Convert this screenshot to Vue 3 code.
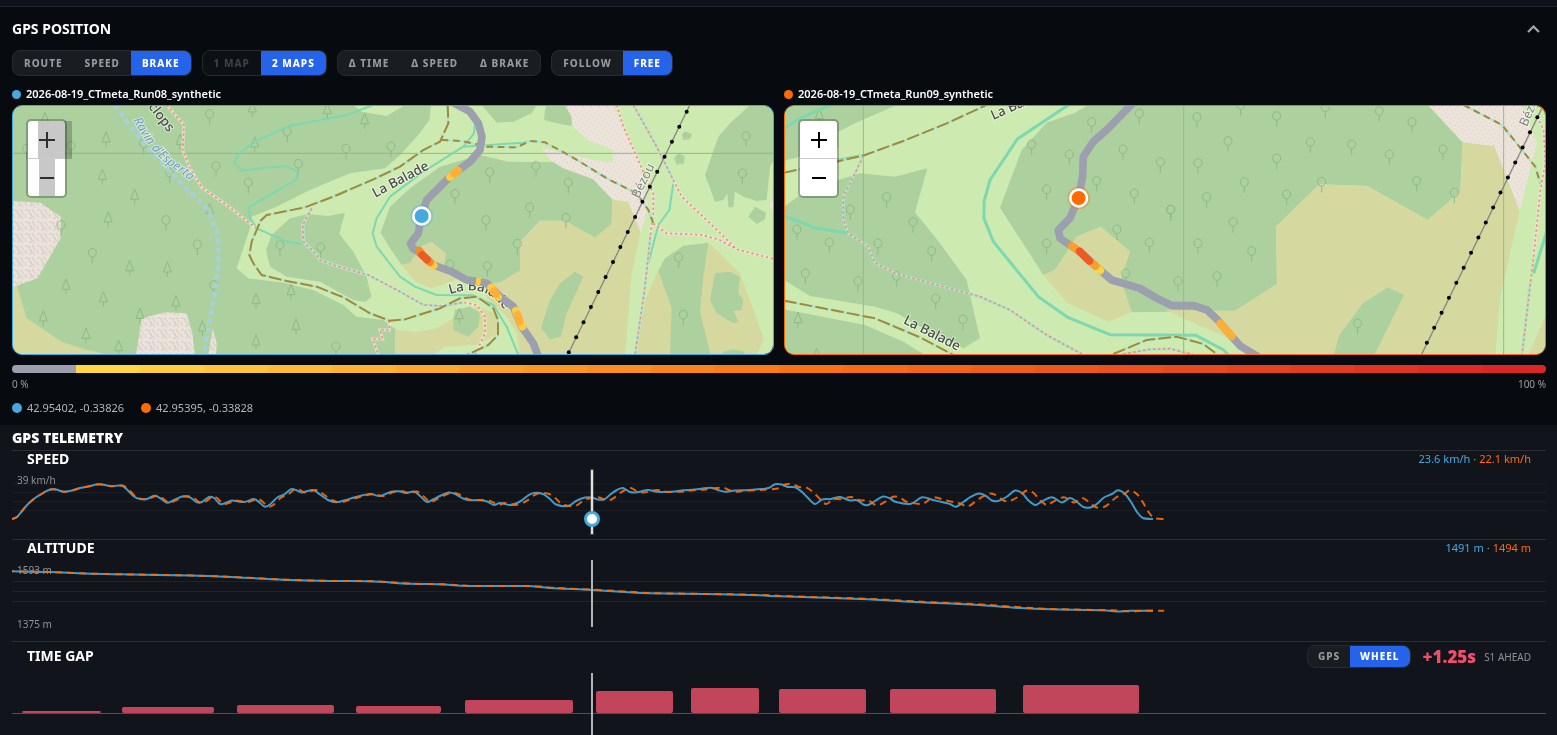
<script setup>
import { ref } from 'vue'

const mode = ref('BRAKE')
const maps = ref('2 MAPS')
const view = ref('FREE')
const source = ref('WHEEL')

const stops = [[255, 214, 68], [249, 115, 22], [220, 38, 38]]
function heat(t) {
  const i = t < 0.5 ? 0 : 1
  const f = (t - i * 0.5) * 2
  return `rgb(${stops[i].map((c, k) => Math.round(c + (stops[i + 1][k] - c) * f)).join(',')})`
}
const scale = ['#9c9fad', ...Array.from({ length: 23 }, (_, i) => heat(i / 22))]

const roundA = [[629,42],[862,95],[1038,146],[1173,139],[648,198],[895,191],[745,247],[431,131],[509,218],[213,137],[80,146],[277,458],[592,433],[498,360],[183,375],[840,435],[962,442],[1008,739],[641,555],[1469,216],[1608,198],[1705,247],[1365,281],[1589,322],[1458,360],[1698,353],[1552,431],[1350,493],[1462,498],[2238,108],[2227,220],[2036,472],[2050,644]]
const pineA = [[135,38],[318,95],[757,5],[982,10],[1094,40],[764,110],[540,102],[307,207],[404,267],[629,310],[325,335],[389,481],[502,485],[198,537],[310,575],[528,587],[130,632],[258,684],[356,721],[420,624],[607,662],[768,580],[888,657],[768,704],[873,553],[1378,625]]
const roundB = [[935,126],[1078,100],[755,193],[868,223],[1029,208],[1141,246],[800,328],[950,302],[1063,340],[1172,389],[800,490],[1011,448],[1108,487],[1037,580],[320,351],[211,388],[399,426],[51,448],[148,487],[294,490],[455,513],[76,580],[234,603],[350,588],[467,655],[549,718],[1251,111],[1382,75],[1490,108],[1636,82],[1798,93],[1896,126],[1344,183],[1591,186],[1715,193],[1828,223],[1989,208],[1254,249],[1490,235],[1393,306],[1625,305],[1520,343],[1910,302],[1280,351],[2023,338],[1172,389],[1359,426],[1254,490],[1415,513],[1194,603],[1311,588],[1733,730]]
const pineB = [[118,85],[54,697],[110,805]]
const pylonsA = Array.from({ length: 17 }, (_, i) => [2060 - i * 22.1, 35 + i * 45.1])
const pylonsB = Array.from({ length: 16 }, (_, i) => [2272 - i * 22.1, 112 + i * 45.1])

const speed = [[12,519],[17,517],[22,511],[28,504],[35,498],[43,493],[50,489.5],[56,489.5],[63,491.7],[70,491],[80,488],[90,486],[98,484.3],[105,485],[111,486.3],[121,485.5],[127,489.5],[134,496.5],[140,499],[147,499],[154,495.7],[160,498],[167,502.7],[174,500],[183,496.3],[190,497.3],[197,502.3],[202,502],[209,497],[214,498],[220,504],[226,502.7],[232,500.5],[244,502],[254,499],[260,503],[265,506.7],[270,504.5],[277,497.7],[284,494.7],[291,489.3],[296,490],[302,492.5],[313,490],[320,494.5],[328,500],[336,502.3],[344,500.5],[356,497],[370,494],[380,496],[391,491.7],[399,491.3],[406,493],[414,491.5],[420,496],[427,502],[433,499.5],[440,496],[449,492.5],[456,494.5],[463,498.5],[470,500.3],[479,500],[487,501.5],[494,505],[500,503],[510,505],[520,501.5],[528,495.5],[534,493],[543,494],[550,499],[556,504.5],[568,506],[576,501],[585,497.5],[592,497.5],[597,499.3],[604,499.5],[611,494],[617,490],[623,488],[630,492],[637,492.3],[648,490],[657,491.7],[672,491.7],[683,490.3],[695,489.5],[711,487.7],[718,490],[725,491.7],[735,490.5],[750,490],[765,488.7],[770,487.3],[775,484.3],[782,484.5],[788,487],[795,487.3],[802,492],[808,498],[815,504],[822,499.5],[831,499],[840,497],[849,500.3],[857,500.3],[863,504.3],[868,505],[875,501],[883,496.5],[890,498.5],[896,502],[911,503.7],[922,497.3],[933,500],[944,502.5],[950,504],[956,506.7],[964,501.5],[971,496.7],[979,493.5],[986,496],[992,500.5],[998,501],[1007,496.5],[1015,490.5],[1022,493],[1028,500],[1035,505],[1041,502],[1052,497.3],[1062,502.5],[1070,498],[1077,502],[1084,507.3],[1092,507],[1098,503],[1104,497.5],[1112,494],[1118,490.3],[1125,494],[1131,502],[1137,512],[1143,518],[1153,519]]
const altitude = [[12,571.3],[50,572],[85,573.5],[120,574.3],[190,575.5],[240,577.5],[290,580],[330,581],[370,581.3],[410,583.7],[440,584.3],[470,586],[525,586],[550,588],[592,590],[625,592],[650,593.3],[720,594.3],[760,595.3],[780,596.3],[860,599],[920,602.3],[970,604.5],[1020,608],[1050,609.3],[1100,610.3],[1117,611.5],[1130,610.7],[1153,610.7]]

// Delay of the second run behind the first one, by position.
const delay = [[12,0],[98,1],[265,4],[450,3],[534,6],[623,8],[711,11],[815,11],[1118,12],[1160,11]]
function lag(x) {
  const i = Math.max(1, delay.findIndex(d => d[0] >= x))
  const [a, b] = [delay[i - 1], delay[i]]
  return a[1] + (b[1] - a[1]) * (x - a[0]) / (b[0] - a[0])
}
const behind = pts => pts.map(([x, y]) => [x + lag(x), y])
function curve(p) {
  let d = `M${p[0][0]} ${p[0][1]}`
  for (let i = 0; i < p.length - 1; i++) {
    const a = p[i - 1] || p[i], b = p[i], c = p[i + 1], e = p[i + 2] || c
    d += `C${b[0] + (c[0] - a[0]) / 6} ${b[1] + (c[1] - a[1]) / 6} ${c[0] - (e[0] - b[0]) / 6} ${c[1] - (e[1] - b[1]) / 6} ${c[0]} ${c[1]}`
  }
  return d
}
const speed1 = curve(speed), speed2 = curve(behind(speed))
const alt1 = curve(altitude), alt2 = curve(behind(altitude))

const gaps = [[22,101,711],[122,214,707],[237,334,705],[356,441,706],[465,573,700],[596,673,691],[691,759,688],[779,866,689],[890,996,689],[1023,1139,685]]
const cursor = { left: (592 - 12) / 15.34 + '%' }
</script>

<template>
  <main class="page">
    <section class="position">
      <header class="head">
        <h2>GPS POSITION</h2>
        <button class="collapse" aria-label="Collapse GPS position">
          <svg width="13" height="8" viewBox="0 0 13 8"><path d="M1 7 6.500 1.500 12 7" fill="none" stroke="#a3a6ab" stroke-width="2.200" /></svg>
        </button>
      </header>

      <div class="toolbar">
        <div class="group">
          <button v-for="o in ['ROUTE', 'SPEED', 'BRAKE']" :key="o" :class="{ on: mode === o }" @click="mode = o">{{ o }}</button>
        </div>
        <div class="group">
          <button :class="{ on: maps === '1 MAP' }" disabled>1 MAP</button>
          <button :class="{ on: maps === '2 MAPS' }">2 MAPS</button>
        </div>
        <div class="group">
          <button>Δ TIME</button><button>Δ SPEED</button><button>Δ BRAKE</button>
        </div>
        <div class="group">
          <button v-for="o in ['FOLLOW', 'FREE']" :key="o" :class="{ on: view === o }" @click="view = o">{{ o }}</button>
        </div>
      </div>

      <div class="maps">
        <article>
          <h3><i class="dot blue"></i>2026-08-19_CTmeta_Run08_synthetic</h3>
          <div class="map one">
            <svg class="canvas" viewBox="39 18 2280 744" preserveAspectRatio="xMidYMid slice">
              <defs>
                <pattern id="scree" width="36" height="36" patternUnits="userSpaceOnUse">
                  <rect width="36" height="36" fill="#ebe2da" />
                  <path d="M3 8q5-7 9 0t8-2M24 4q8 2 4 9M5 18q-4 8 4 10M14 16q8-3 8 5t8 2M15 31q5-6 9 0M31 27q-5 4 1 7M32 13l3 6" fill="none" stroke="#cdc8c3" stroke-width="3" />
                </pattern>
                <pattern id="gravel" width="24" height="24" patternUnits="userSpaceOnUse">
                  <rect width="24" height="24" fill="#ece3db" />
                  <path d="M3 4h3M15 9h3M8 16h3M20 20h3" stroke="#d8cbc3" stroke-width="3" />
                </pattern>
                <path id="ravin" d="M400 60 Q455 165 520 205 T610 300" />
                <path id="balade" d="M1350 582Q1420 560 1462 582T1530 660" />
              </defs>
              <rect x="0" y="0" width="2400" height="800" fill="#cdebb0" />
              <g fill="#acd19e">
                <path d="M36 15H1060L1085 35 1160 48 1215 15H1293L1288 60 1255 105 1200 165 1155 205 1050 220 930 270 830 320 755 350 750 385 710 505 745 535 850 548 940 570 1030 615 1070 650 1150 660 1190 690 1185 765H36Z" />
                <path d="M1440 165 1525 185 1670 187 1780 238 1837 298 1835 372 1785 413 1695 363 1620 362 1560 425 1560 512 1500 548 1460 550 1335 510 1295 425 1230 490 1205 495 1170 445 1142 398 1170 320 1230 265 1320 200Z" />
                <path d="M1445 15H1610L1595 40 1540 65 1490 68ZM1640 15H1695L1715 50V78L1670 70 1632 60 1635 30Z" />
                <path d="M2330 15H2250L2190 70 2155 110 2115 225 2145 305 2170 300 2182 280 2185 322H2200L2205 275 2230 290 2270 303 2300 300 2310 200 2330 165Z" />
                <path d="M2045 105 2055 94 2076 102 2070 118 2050 120ZM2022 175 2035 160 2054 168 2052 190 2030 194ZM2245 350 2265 320 2298 338 2295 358 2270 372Z" />
                <path d="M870 355 925 342 985 348 1035 338 1018 402 1060 455 1100 530 1114 590 1095 606 1060 600 960 545 860 530 810 500 798 450 815 405Z" />
              </g>
              <g fill="#d6d99f">
                <path d="M1295 425 1338 460 1332 505 1380 535 1340 550 1295 565 1245 545 1205 495 1230 488 1260 440Z" />
                <path d="M1837 298 1885 305 1922 395 1895 520 1885 650 1875 765H1560L1550 700 1520 650 1460 595 1450 550 1500 548 1560 512V425L1620 362H1695L1785 413 1835 372Z" />
                <path d="M2128 430 2220 520 2292 718 2270 765H1905L1935 600 1975 510 2020 455Z" />
                <path d="M36 555H50L80 655 185 725 260 750 330 765H36Z" />
                <path d="M1185 690 1250 695 1310 685 1360 655 1430 620 1490 640 1495 700 1430 735 1335 740 1300 765H1185Z" />
              </g>
              <g fill="#acd19e">
                <path d="M1725 515 1750 530 1700 640 1682 710 1650 718 1623 683 1650 600 1680 550Z" />
                <path d="M2125 428 2050 437 1995 475 1975 512 2015 625 2010 765H2132L2100 635 2110 530Z" />
                <path d="M2145 520 2190 515 2220 530 2215 580 2230 600 2225 630 2200 632 2215 665 2200 670 2150 640 2130 600ZM2170 755 2200 748 2235 755 2230 765H2165Z" />
                <path d="M1360 655 1365 630 1410 620 1440 640 1435 680 1405 710 1360 690Z" />
              </g>
              <path fill="url(#scree)" d="M36 303 122 308 182 350V415L112 535 36 562ZM408 765 425 655 495 637 560 640 577 700 585 765ZM625 765 638 683 650 730 648 765Z" />
              <path fill="url(#gravel)" d="M1695 15 1715 50 1718 80 1765 120 1838 150V188L1780 180 1625 143 1650 180 1690 205 1780 238 1837 298 1885 305 1922 398 1945 320 1930 260 1920 200 1860 60 1838 15ZM2319 300 2308 315 2319 335Z" />

              <g class="tree">
                <path v-for="([x, y], i) in roundA" :key="'r' + i" :d="`M${x} ${y + 13}v19M${x - 12} ${y}a12 13 0 1 0 24 0a12 13 0 1 0-24 0`" />
                <path v-for="([x, y], i) in pineA" :key="'p' + i" :d="`M${x} ${y}l-12 31h24zM${x} ${y + 31}v15`" />
              </g>
              <path d="M36 160H2330" stroke="#8fb78a" stroke-width="3" />

              <path class="water" d="M345 15 380 65 440 140 510 215 570 275 625 330 655 410 655 490 648 560 630 660 610 765" />
              <g class="teal">
                <path d="M1120 15 1040 45 870 77 770 122 720 158 703 187 725 212 800 203 860 199 892 215 890 238 748 320 748 350 770 385 860 425 905 432" />
                <path d="M1425 70 1422 100 1390 140 1270 215 1170 290 1130 355 1118 400 1130 440 1200 530 1245 560 1310 585 1420 586 1480 615 1520 680 1555 765" />
                <path d="M1390 140 1470 135 1570 128 1590 123M2020 250 2008 330 1975 375 1945 490" />
              </g>
              <path class="foot-bed" d="M500 15 552 75 548 150 570 205 605 262 700 330 768 385M935 325 908 375 910 425 950 465 960 480 1000 495 1105 525 1200 575 1270 615 1330 618 1390 607 1430 615 1455 650V700L1425 765M1168 662V690H1140L1148 717H1118L1135 765M1850 15 1870 80 1905 160 1930 215 1960 280V340L1952 400 1935 560 1905 765M1900 15 1970 140 2020 240 2045 290 2130 370 2210 448 2325 478M1960 370 2000 400 2100 404 2155 418 2210 448" />
              <path class="mint-bed" d="M935 325 908 375 910 425 950 465 960 480 1000 495 1105 525 1200 575 1270 615 1330 618 1390 607M1900 15 1970 140 2020 240M1952 400 1935 560 1905 765" />
              <path class="foot" d="M500 15 552 75 548 150 570 205 605 262 700 330 768 385M935 325 908 375 910 425 950 465 960 480 1000 495 1105 525 1200 575 1270 615 1330 618 1390 607 1430 615 1455 650V700L1425 765M1168 662V690H1140L1148 717H1118L1135 765M1850 15 1870 80 1905 160 1930 215 1960 280V340L1952 400 1935 560 1905 765M1900 15 1970 140 2020 240 2045 290 2130 370 2210 448 2325 478M1960 370 2000 400 2100 404 2155 418 2210 448" />
              <path class="track-bed" d="M1343 15 1345 70 1320 125 1270 150 1200 200 1120 238 1000 290 915 322 800 345 782 362 755 425 748 465 760 490 785 525 860 543 950 560 1030 592 1110 640 1168 662 1215 658 1320 625 1380 595 1430 590 1480 625 1494 660V705L1465 735 1400 765" />
              <path class="track-bed" d="M1325 120 1385 123 1460 140 1550 142 1590 123 1635 127 1715 170 1820 235 1910 280 1945 330 1960 370" />
              <path class="track" d="M1343 15 1345 70 1320 125 1270 150 1200 200 1120 238 1000 290 915 322 800 345 782 362 755 425 748 465 760 490 785 525 860 543 950 560 1030 592 1110 640 1168 662 1215 658 1320 625 1380 595 1430 590 1480 625 1494 660V705L1465 735 1400 765" />
              <path class="track short" d="M1325 120 1385 123 1460 140 1550 142 1590 123 1635 127 1715 170 1820 235 1910 280 1945 330 1960 370" />

              <path class="power" d="M2068 18 1703 765" />
              <circle v-for="([x, y], i) in pylonsA" :key="'y' + i" :cx="x" :cy="y" r="6" />
              <text class="place" transform="translate(1126 293) rotate(-28)">La Balade</text>
              <text class="place"><textPath href="#balade">La Balade</textPath></text>
              <text class="place" text-anchor="end" transform="translate(505 98) rotate(52)">Cyclops</text>
              <text class="place soft" transform="translate(1916 297) rotate(-64)">Bézou</text>
              <text class="place river"><textPath href="#ravin">Ravin d'Esperta</textPath></text>

              <g class="route">
                <path d="M1360 8 1410 35 1435 70 1446 110 1440 150 1410 185 1350 230 1280 300 1265 345 1255 400 1232 430 1238 445 1265 462 1300 495 1355 515 1400 540 1435 545 1460 550 1500 590 1540 620 1565 680 1600 730 1615 770" />
                <path stroke="#fdcc43" d="M1350 231 1370 214M1290 488 1301 497M1473 563 1494 591M1547 632 1567 680" />
                <path class="flat" stroke="#fdcc43" d="M1428 543 1442 545" />
                <path stroke="#fdb035" d="M1362 221 1374 212M1482 574 1489 583M1553 645 1558 664" />
                <path stroke="#f98a29" d="M1258 452 1264 459M1284 482 1290 487" />
                <path stroke="#ef5a20" d="M1266 465 1281 479" />
              </g>
              <circle cx="1265" cy="348" r="34" fill="#45a9df" opacity=".35" />
              <circle cx="1265" cy="348" r="25" fill="#45a9df" stroke="#fff" stroke-width="8" />
            </svg>
            <div class="zoom held">
              <button aria-label="Zoom in"><svg width="16" height="16" viewBox="0 0 16 16"><path d="M0 8H16M8 0V16" /></svg></button>
              <button aria-label="Zoom out"><svg width="16" height="16" viewBox="0 0 16 16"><path d="M1 8H15" /></svg></button>
            </div>
          </div>
        </article>

        <article>
          <h3><i class="dot orange"></i>2026-08-19_CTmeta_Run09_synthetic</h3>
          <div class="map two">
            <svg class="canvas" viewBox="15 78 2280 744" preserveAspectRatio="xMidYMid slice">
              <rect x="0" y="60" width="2400" height="800" fill="#cdebb0" />
              <g fill="#acd19e">
                <path d="M12 75H350L225 130 175 155 175 202 60 230 12 242ZM12 380 60 345 175 300 240 280 345 290 442 265 405 397 480 490 560 600 600 775 550 805 430 745 350 700 285 680 90 648 12 600ZM12 688 255 735 370 785 435 825H12Z" />
                <path d="M925 75 885 98 800 128 725 210 660 383 790 585 825 570 890 470 962 440 1050 515 1020 600 1055 697 1366 692 1491 612 1488 440 1618 313 1761 318 1943 420 2041 335 2048 187 1944 75Z" />
              </g>
              <path fill="#d6d99f" d="M962 440 1050 515 1022 600 1055 697 985 725 860 668 790 585 825 570 890 470ZM1366 692 1491 612 1488 440 1618 313 1761 318 1943 420 2041 335 2048 187 2143 198 2219 392 2161 650 2146 825H1411L1350 778 1155 690ZM2300 700 2245 825H2300Z" />
              <path fill="#acd19e" d="M1661 825 1678 765 1749 670 1824 622 1872 645 1783 825Z" />
              <path fill="url(#gravel)" d="M1944 75 2048 187 2143 198 2219 392 2271 190 2226 75Z" />
              <g class="tree">
                <path v-for="([x, y], i) in roundB" :key="'r' + i" :d="`M${x} ${y + 13}v19M${x - 12} ${y}a12 13 0 1 0 24 0a12 13 0 1 0-24 0`" />
                <path v-for="([x, y], i) in pineB" :key="'p' + i" :d="`M${x} ${y}l-12 31h24zM${x} ${y + 31}v15`" />
              </g>
              <path d="M250 75V825M1211 75V825M2171 75V825" stroke="#94bb8c" stroke-width="3" />
              <g class="teal wide">
                <path d="M12 145 60 115 150 75M12 408 110 445 205 460M150 245 250 226" />
                <path d="M865 75 712 177 630 300 612 365V415L640 485 775 650 865 713 990 764 1248 766 1331 810 1345 825M2300 455 2261 580" />
              </g>
              <path class="mint-bed" d="M250 228 215 300 190 350V420L205 460 265 500 285 548 350 582 600 650 690 690 800 765 905 822M1030 822 1110 808 1170 806 1240 824" />
              <path class="foot-bed" d="M2271 110 2291 150 2296 250 2281 330 2261 530" />
              <path class="mint-bed" d="M2251 600 2226 825" />
              <path class="foot" d="M250 228 215 300 190 350V420L205 460 265 500 285 548 350 582 600 650 690 690 800 765 905 822M1030 822 1110 808 1170 806 1240 824M2271 110 2291 150 2296 250 2281 330 2261 530 2226 825" />
              <path class="track-bed" d="M12 278 60 268 170 245 255 225 370 183 500 130 620 75M12 662 285 715 420 772 520 825M1000 822 1100 780 1190 770 1270 792 1310 822M2051 75 2166 135 2226 210 2266 260 2281 310" />
              <path class="track" d="M12 278 60 268 170 245 255 225 370 183 500 130 620 75M12 662 285 715 420 772 520 825M1000 822 1100 780 1190 770 1270 792 1310 822" />
              <path class="track short" d="M2051 75 2166 135 2226 210 2266 260 2281 310" />
              <path class="power" d="M2290 76 1924 825" />
              <circle v-for="([x, y], i) in pylonsB" :key="'y' + i" :cx="x" :cy="y" r="6" />
              <text class="place" transform="translate(640 120) rotate(-24)">La Balade</text>
              <text class="place" transform="translate(368 729) rotate(27)">La Balade</text>
              <text class="place soft" transform="translate(2240 142) rotate(-66)">Bézou</text>
              <g class="route">
                <path d="M1060 68 980 150 940 185 910 230 908 290 895 355 870 415 835 450 840 475 870 495 905 520 960 570 995 600 1080 625 1131 655 1176 677 1241 677 1281 690 1311 718 1356 770 1381 798 1431 828" />
                <path stroke="#fdd243" d="M955 567 961 572" />
                <path stroke="#fdb035" d="M1321 730 1355 769" />
                <path stroke="#fb9e2e" d="M876 498 890 508M938 550 947 558" />
                <path stroke="#ef5a20" d="M899 514 928 543" />
              </g>
              <circle cx="896" cy="354" r="34" fill="#ff6b00" opacity=".35" />
              <circle cx="896" cy="354" r="25" fill="#ff6b00" stroke="#fff" stroke-width="8" />
            </svg>
            <div class="zoom">
              <button aria-label="Zoom in"><svg width="16" height="16" viewBox="0 0 16 16"><path d="M0 8H16M8 0V16" /></svg></button>
              <button aria-label="Zoom out"><svg width="16" height="16" viewBox="0 0 16 16"><path d="M1 8H15" /></svg></button>
            </div>
          </div>
        </article>
      </div>

      <div class="scale"><span v-for="(c, i) in scale" :key="i" :style="{ background: c }"></span></div>
      <div class="scale-labels"><span>0 %</span><span>100 %</span></div>
      <div class="coords">
        <span><i class="dot blue"></i>42.95402, -0.33826</span>
        <span><i class="dot orange"></i>42.95395, -0.33828</span>
      </div>
    </section>

    <section class="telemetry">
      <h2>GPS TELEMETRY</h2>

      <article class="row speed">
        <header><h3>SPEED</h3><p><b class="c1">23.6 km/h</b> · <b class="c2">22.1 km/h</b></p></header>
        <div class="plot">
          <svg viewBox="12 470 1534 64" preserveAspectRatio="none">
            <path class="rule faint" d="M12 484H1546M12 492.500H1546M12 501.500H1546M12 510.500H1546" />
            <path class="line c1" :d="speed1" /><path class="line c2" :d="speed2" />
          </svg>
          <span class="axis top">39 km/h</span>
          <i class="cursor strong" :style="cursor"></i>
          <i class="knob" :style="cursor"></i>
        </div>
      </article>

      <article class="row altitude">
        <header><h3>ALTITUDE</h3><p><b class="c1">1491 m</b> · <b class="c2">1494 m</b></p></header>
        <div class="plot">
          <svg viewBox="12 560 1534 67" preserveAspectRatio="none">
            <path class="rule" d="M12 581.500H1546M12 591.500H1546M12 601.500H1546" />
            <path class="line c1" :d="alt1" /><path class="line c2" :d="alt2" />
          </svg>
          <span class="axis top">1593 m</span>
          <span class="axis bottom">1375 m</span>
          <i class="cursor" :style="cursor"></i>
        </div>
      </article>

      <article class="row gap">
        <header>
          <h3>TIME GAP</h3>
          <div class="gap-info">
            <div class="group small">
              <button v-for="o in ['GPS', 'WHEEL']" :key="o" :class="{ on: source === o }" @click="source = o">{{ o }}</button>
            </div>
            <strong>+1.25s</strong>
            <span>S1 AHEAD</span>
          </div>
        </header>
        <div class="plot">
          <svg viewBox="12 673 1534 62" preserveAspectRatio="none">
            <path class="base" d="M12 713.500H1546" />
            <rect v-for="([a, b, t], i) in gaps" :key="i" :x="a" :y="t" :width="b - a" :height="713 - t" rx="2" fill="#c2465b" />
          </svg>
          <i class="cursor" :style="cursor"></i>
        </div>
      </article>
    </section>
  </main>
</template>

<style>
body { background: #070a0f; overflow: hidden; }
</style>

<style scoped>
* { box-sizing: border-box; }
.page { font-family: "Noto Sans", "Open Sans", sans-serif; color: #fff; border-top: 6px solid #0d1119; }
h2, h3, p { margin: 0; }
button { font-family: inherit; border: 0; padding: 0; margin: 0; cursor: pointer; }
.position { border-top: 1px solid #24282d; padding: 12px 11px 9px 12px; }
.head { display: flex; align-items: center; justify-content: space-between; height: 20px; }
h2 { font-size: 14px; line-height: 20px; font-weight: 700; }
.collapse { background: none; display: flex; padding: 4px 6px; }
.toolbar { display: flex; gap: 10px; margin-top: 11px; }
.group { display: flex; height: 26px; border: 1px solid #272b30; border-radius: 8px; overflow: hidden; background: #191c20; }
.group button { background: none; color: #96989b; font-size: 10px; line-height: 24px; font-weight: 800; letter-spacing: 1px; padding: 0 11px; }
.group button.on { background: #2563eb; color: #fff; }
.group button:disabled { background: #0d1014; color: #3d4044; }
.maps { display: grid; grid-template-columns: 1fr 1fr; gap: 10px; margin-top: 10px; }
.maps h3 { display: flex; align-items: center; gap: 5px; font-size: 11px; line-height: 16px; font-weight: 600; height: 16px; margin-bottom: 3px; }
.dot { display: block; width: 9px; height: 9px; border-radius: 50%; }
.blue { background: #45a9df; }
.orange { background: #ff6b00; }
.map { position: relative; height: 250px; border: 1px solid; border-radius: 10px; overflow: hidden; }
.map.one { border-color: #45a9df; }
.map.two { border-color: #ff6b00; }
.canvas { display: block; width: 100%; height: 100%; }
.zoom { position: absolute; left: 13px; top: 13px; width: 41px; border: 2px solid rgba(0, 0, 0, .25); border-radius: 5px; background-clip: padding-box; background-color: #fff; }
.zoom button { display: flex; align-items: center; justify-content: center; position: relative; width: 100%; height: 37px; background: none; }
.zoom button + button { border-top: 1px solid #ccc; height: 38px; }
.zoom path { fill: none; stroke: #000; stroke-width: 2; }
.zoom svg { position: relative; }
.held path { stroke: #2e2e2e; }
.held button::before { content: ""; position: absolute; left: 10px; top: 0; width: 34px; height: 38px; background: #bcbcbc; opacity: .82; mix-blend-mode: multiply; }
.held button + button::before { left: 11px; width: 16px; height: 37px; }
.tree path { fill: none; stroke: #8fb985; stroke-width: 3; }
.teal path { fill: none; stroke: #7bd8b0; stroke-width: 6; stroke-linejoin: round; }
.wide path { stroke-width: 9; }
.water { fill: none; stroke: #a7d0df; stroke-width: 13; stroke-dasharray: 15 12; }
.foot-bed { fill: none; stroke: #efe9dd; stroke-width: 9; opacity: .65; }
.mint-bed { fill: none; stroke: #aee5cd; stroke-width: 8; }
.foot { fill: none; stroke: #f28b80; stroke-width: 5; stroke-dasharray: 7 8; }
.track-bed { fill: none; stroke: #afe5cf; stroke-width: 7; }
.track { fill: none; stroke: #a18a3b; stroke-width: 6; stroke-dasharray: 38 10; }
.track.short { stroke-dasharray: 20 14; }
.power { stroke: #85887f; stroke-width: 4; }
.place { font-size: 40px; fill: #4a4c49; stroke: rgba(255, 255, 255, .5); stroke-width: 6; paint-order: stroke; font-weight: 500; }
.soft { fill: #85837f; font-size: 38px; font-weight: 400; }
.river { fill: #6c9ccb; font-size: 37px; font-style: italic; font-weight: 400; }
.route path { fill: none; stroke-width: 23; stroke-linecap: round; stroke-linejoin: round; }
.route path:first-child { stroke: #9c9fad; }
.route .flat { stroke-linecap: butt; }
.scale { display: flex; height: 8px; margin-top: 10px; border-radius: 4px; overflow: hidden; }
.scale span { flex: 1; }
.scale-labels { display: flex; justify-content: space-between; margin-top: 4px; font-size: 10px; line-height: 14px; color: #9b9da0; }
.coords { display: flex; gap: 17px; margin-top: 9px; font-size: 11px; line-height: 16px; color: #b3b5b7; }
.coords span { display: flex; align-items: center; gap: 5px; }
.coords .dot { width: 10px; height: 10px; }
.telemetry { background: #11151b; padding: 2px 11px 0 12px; }
.telemetry h2 { font-weight: 900; height: 23px; line-height: 22px; }
.row { border-top: 1px solid #2b2f35; }
.row header { display: flex; justify-content: space-between; height: 19px; padding: 0 15px; }
.row h3 { font-size: 14px; line-height: 16px; font-weight: 700; }
.row p { display: flex; gap: 3px; font-size: 11px; line-height: 16px; color: #999; }
.row p b { font-weight: 400; }
b.c1 { color: #45a9df; }
b.c2 { color: #ff6b00; }
.speed { height: 89px; }
.altitude { height: 102px; }
.altitude header { height: 20px; }
.plot { position: relative; height: 64px; }
.altitude .plot { height: 67px; }
.gap .plot { height: 62px; }
.plot svg { display: block; width: 100%; height: 100%; }
.plot path { fill: none; vector-effect: non-scaling-stroke; }
.plot .rule { stroke: #20242a; stroke-width: 1; }
.plot .faint { stroke: #1c2026; }
.plot .base { stroke: #4d5055; stroke-width: 1; }
.line { stroke-width: 2; opacity: .9; }
.line.c1 { stroke: #45a9df; }
.line.c2 { stroke: #ff6b00; stroke-dasharray: 7 5; }
.altitude .line.c2 { stroke-dashoffset: 5; }
.axis { position: absolute; left: 5px; font-size: 10px; line-height: 14px; color: #8e9195; }
.axis.top { top: 3px; }
.axis.bottom { bottom: -4px; }
.cursor { position: absolute; top: 0; bottom: 0; width: 2px; margin-left: -1px; background: #b2b4b6; }
.cursor.strong { background: #dfe0e1; box-shadow: 0 0 0 1px rgba(160, 160, 160, .35); }
.knob { position: absolute; top: 41px; width: 16px; height: 16px; margin-left: -8px; border-radius: 50%; background: #fff; border: 3px solid #45a9df; }
.gap header { height: 31px; align-items: flex-start; }
.gap h3 { line-height: 28px; }
.gap-info { display: flex; align-items: center; height: 29px; }
.small { height: 23px; }
.small button { line-height: 21px; padding: 0 10px; }
.gap-info strong { margin: 0 8px 0 12px; font-size: 17px; line-height: 24px; font-weight: 900; color: #ef4f6b; }
.gap-info span { font-size: 10px; color: #8e9195; }
</style>
